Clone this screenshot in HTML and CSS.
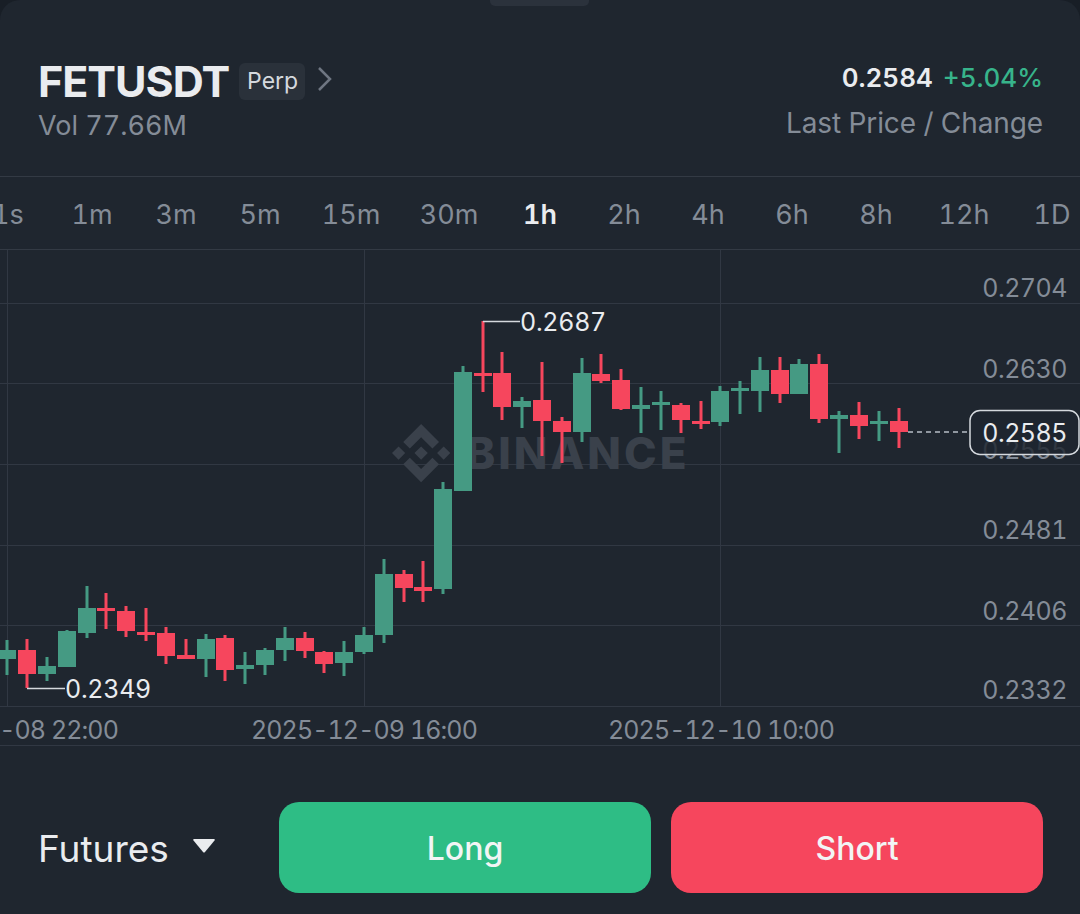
FILE: index.html
```html
<!DOCTYPE html>
<html>

<head>
<meta charset="utf-8">
<title>FETUSDT</title>
<link rel="stylesheet" href="styles.css">
</head>

<body>

<div id="sheet">
	<div class="handle"></div>

	<div id="header">
		<div>
			<div class="symbol">
				<span class="name">FETUSDT</span>
				<span class="badge">Perp</span>
				<svg class="chevron" width="16" height="26" viewBox="0 0 16 26">
					<path d="M2 2l11 11L2 24"/>
				</svg>
			</div>
			<div class="vol">Vol 77.66M</div>
		</div>
		<div class="quote">
			<div class="price"><span>0.2584</span> <span class="change">+5.04%</span></div>
			<div class="caption">Last Price / Change</div>
		</div>
	</div>

	<div id="tabs">
		<span>1s</span>
		<span>1m</span>
		<span>3m</span>
		<span>5m</span>
		<span>15m</span>
		<span>30m</span>
		<span class="active">1h</span>
		<span>2h</span>
		<span>4h</span>
		<span>6h</span>
		<span>8h</span>
		<span>12h</span>
		<span>1D</span>
	</div>

	<svg id="chart" width="1080" height="496" viewBox="0 250 1080 496">
		<g class="grid">
			<path d="M0 303.500H1080M0 383.500H1080M0 464.500H1080M0 545.500H1080M0 625.500H1080M0 706.500H1080M0 745.500H1080"/>
			<path d="M7.500 250V706M364.500 250V706M720.500 250V706"/>
		</g>

		<g class="mark">
			<g transform="translate(392 424) scale(.46)">
				<path d="M38.730 53.200l24.590-24.580 24.600 24.600 14.300-14.310L63.320 0 24.420 38.900zM0 63.310L14.300 49l14.310 14.310-14.310 14.300zM38.730 73.410L63.320 98l24.600-24.600 14.310 14.290-38.900 38.910-38.910-38.880-.010-.010zM98 63.310L112.300 49l14.310 14.300-14.310 14.320zM77.830 63.300L63.320 48.780 48.810 63.280l14.510 14.500z"/>
			</g>
			<text x="466" y="469">BINANCE</text>
		</g>

		<g class="axis">
			<text x="1067" y="297">0.2704</text>
			<text x="1067" y="378">0.2630</text>
			<text x="1067" y="459">0.2555</text>
			<text x="1067" y="539">0.2481</text>
			<text x="1067" y="620">0.2406</text>
			<text x="1067" y="699">0.2332</text>
		</g>
		<g class="times">
			<text x="5" y="739">2025-12-08 22:00</text>
			<text x="364" y="739">2025-12-09 16:00</text>
			<text x="721" y="739">2025-12-10 10:00</text>
		</g>

		<g class="up">
			<rect x="5.500" y="640" width="3" height="35"/><rect x="-2" y="650" width="18" height="9"/>
			<rect x="45.500" y="657" width="3" height="24"/><rect x="38" y="666" width="18" height="8"/>
			<rect x="65.500" y="630" width="3" height="37"/><rect x="58" y="631" width="18" height="36"/>
			<rect x="85.500" y="586" width="3" height="52"/><rect x="78" y="608" width="18" height="25"/>
			<rect x="204.500" y="634" width="3" height="43"/><rect x="197" y="639" width="18" height="20"/>
			<rect x="243.500" y="652" width="3" height="32"/><rect x="236" y="665" width="18" height="4"/>
			<rect x="263.500" y="648" width="3" height="27"/><rect x="256" y="650" width="18" height="15"/>
			<rect x="283.500" y="627" width="3" height="34"/><rect x="276" y="638" width="18" height="12"/>
			<rect x="342.500" y="641" width="3" height="35"/><rect x="335" y="652" width="18" height="11"/>
			<rect x="362.500" y="627" width="3" height="27"/><rect x="355" y="635" width="18" height="17"/>
			<rect x="382.500" y="559" width="3" height="84"/><rect x="375" y="574" width="18" height="61"/>
			<rect x="441.500" y="482" width="3" height="112"/><rect x="434" y="489" width="18" height="100"/>
			<rect x="461.500" y="366" width="3" height="125"/><rect x="454" y="372" width="18" height="119"/>
			<rect x="520.500" y="397" width="3" height="31"/><rect x="513" y="401" width="18" height="6"/>
			<rect x="580.500" y="358" width="3" height="84"/><rect x="573" y="373" width="18" height="59"/>
			<rect x="639.500" y="387" width="3" height="46"/><rect x="632" y="405" width="18" height="4"/>
			<rect x="659.500" y="391" width="3" height="39"/><rect x="652" y="402" width="18" height="3"/>
			<rect x="718.500" y="386" width="3" height="40"/><rect x="711" y="391" width="18" height="31"/>
			<rect x="738.500" y="381" width="3" height="33"/><rect x="731" y="388" width="18" height="3"/>
			<rect x="758.500" y="357" width="3" height="55"/><rect x="751" y="370" width="18" height="21"/>
			<rect x="797.500" y="359" width="3" height="35"/><rect x="790" y="364" width="18" height="30"/>
			<rect x="837.500" y="411" width="3" height="42"/><rect x="830" y="415" width="18" height="4"/>
			<rect x="877.500" y="411" width="3" height="30"/><rect x="870" y="421" width="18" height="3"/>
		</g>
		<g class="down">
			<rect x="25.500" y="639" width="3" height="49"/><rect x="18" y="650" width="18" height="24"/>
			<rect x="104.500" y="593" width="3" height="36"/><rect x="97" y="608" width="18" height="3"/>
			<rect x="124.500" y="606" width="3" height="31"/><rect x="117" y="611" width="18" height="20"/>
			<rect x="144.500" y="608" width="3" height="33"/><rect x="137" y="632" width="18" height="3"/>
			<rect x="164.500" y="627" width="3" height="37"/><rect x="157" y="633" width="18" height="23"/>
			<rect x="184.500" y="639" width="3" height="20"/><rect x="177" y="655" width="18" height="4"/>
			<rect x="223.500" y="635" width="3" height="46"/><rect x="216" y="638" width="18" height="32"/>
			<rect x="303.500" y="632" width="3" height="26"/><rect x="296" y="638" width="18" height="13"/>
			<rect x="322.500" y="651" width="3" height="22"/><rect x="315" y="652" width="18" height="12"/>
			<rect x="402.500" y="570" width="3" height="32"/><rect x="395" y="574" width="18" height="14"/>
			<rect x="421.500" y="561" width="3" height="41"/><rect x="414" y="587" width="18" height="4"/>
			<rect x="481.500" y="321" width="3" height="71"/><rect x="474" y="373" width="18" height="3"/>
			<rect x="500.500" y="352" width="3" height="68"/><rect x="493" y="373" width="18" height="34"/>
			<rect x="540.500" y="362" width="3" height="94"/><rect x="533" y="400" width="18" height="21"/>
			<rect x="560.500" y="417" width="3" height="46"/><rect x="553" y="421" width="18" height="11"/>
			<rect x="599.500" y="354" width="3" height="29"/><rect x="592" y="374" width="18" height="7"/>
			<rect x="619.500" y="369" width="3" height="41"/><rect x="612" y="380" width="18" height="29"/>
			<rect x="679.500" y="403" width="3" height="30"/><rect x="672" y="405" width="18" height="15"/>
			<rect x="699.500" y="401" width="3" height="28"/><rect x="692" y="421" width="18" height="3"/>
			<rect x="778.500" y="357" width="3" height="46"/><rect x="771" y="370" width="18" height="24"/>
			<rect x="817.500" y="354" width="3" height="69"/><rect x="810" y="364" width="18" height="55"/>
			<rect x="857.500" y="402" width="3" height="37"/><rect x="850" y="415" width="18" height="11"/>
			<rect x="897.500" y="408" width="3" height="40"/><rect x="890" y="421" width="18" height="11"/>
		</g>

		<g class="callout">
			<path d="M483 321.500H520"/>
			<text x="520" y="331">0.2687</text>
			<path d="M27 688.500H65"/>
			<text x="65" y="698">0.2349</text>
		</g>

		<path class="last" d="M908 432H970"/>
		<rect class="tag" x="970" y="410.500" width="109" height="44" rx="10"/>
		<text class="tagtext" x="1067" y="442">0.2585</text>
	</svg>

	<div id="footer">
		<div class="market">
			<span>Futures</span>
			<svg width="24" height="16" viewBox="0 0 24 16"><path d="M2 1h20q1.500 0 .500 1.500L13 14q-1 1.200-2 0L1.500 2.500Q.500 1 2 1z"/></svg>
		</div>
		<button type="button" class="long">Long</button>
		<button type="button" class="short">Short</button>
	</div>
</div>

</body>

</html>
```

FILE: styles.css
```css
html, body {
	margin: 0;
	padding: 0;
	background-color: #181e26;
}

body {
	font-family: "Inter", "Liberation Sans", sans-serif;
	font-variant-numeric: tabular-nums;
	overflow: hidden;
}

#sheet {
	position: relative;
	width: 1080px;
	height: 914px;
	overflow: hidden;
	border-radius: 20px 20px 0 0;
	background-color: #1f262f;
}

.handle {
	position: absolute;
	top: -8px;
	left: 490px;
	width: 99px;
	height: 14px;
	border-radius: 5px;
	background-color: #2b323c;
}

#header {
	display: flex;
	justify-content: space-between;
	box-sizing: border-box;
	height: 177px;
	padding: 57px 37px 0 38px;
	border-bottom: 1px solid #333a44;
}

.symbol {
	display: flex;
	align-items: center;
}

.name {
	font-size: 43px;
	font-weight: 700;
	line-height: 48px;
	letter-spacing: -1px;
	color: #eaecef;
}

.badge {
	margin-left: 10px;
	padding: 0 7px 0 8px;
	height: 37px;
	line-height: 37px;
	font-size: 23px;
	border-radius: 6px;
	color: #d5d9de;
	background-color: #2a313a;
}

.chevron {
	margin: -4px 0 0 12px;
	fill: none;
	stroke: #6f7682;
	stroke-width: 2.500;
}

.vol {
	margin-top: 3px;
	font-size: 27px;
	line-height: 36px;
	color: #848c97;
}

.quote {
	text-align: right;
}

.price {
	margin-top: 3px;
	font-size: 26px;
	line-height: 36px;
	font-weight: 600;
	color: #eaecef;
}

.change {
	margin-left: 3px;
	font-weight: 500;
	color: #37b48b;
}

.caption {
	margin-top: 9px;
	font-size: 28px;
	line-height: 36px;
	letter-spacing: -.1px;
	color: #848c97;
}

#tabs {
	display: grid;
	grid-template-columns: repeat(4, 84px) 98px 98px repeat(5, 84px) 92px 84px;
	align-items: center;
	justify-items: center;
	box-sizing: border-box;
	width: 1200px;
	height: 73px;
	padding-top: 2px;
	margin-left: -34px;
	border-bottom: 1px solid #333a44;
	font-size: 27px;
	color: #848c97;
	white-space: nowrap;
}

#tabs .active {
	font-weight: 600;
	color: #eaecef;
}

#chart {
	display: block;
}

.grid path {
	fill: none;
	stroke: #313843;
	stroke-width: 1;
}

.mark {
	fill: #3a414b;
}

.mark text {
	font-size: 44px;
	font-weight: 800;
	letter-spacing: 3px;
}

.axis text {
	font-size: 25px;
	letter-spacing: -.5px;
	fill: #848c97;
	text-anchor: end;
}

.times text {
	font-size: 25px;
	letter-spacing: -.9px;
	fill: #848c97;
	text-anchor: middle;
}

.up {
	fill: #459a83;
}

.down {
	fill: #f6465d;
}

.callout path {
	fill: none;
	stroke: #d5d9de;
	stroke-width: 1.500;
}

.callout text {
	font-size: 25px;
	letter-spacing: -.3px;
	fill: #eaecef;
}

.last {
	fill: none;
	stroke: #b7bdc6;
	stroke-width: 1.500;
	stroke-dasharray: 5 4;
}

.tag {
	fill: #1f262f;
	fill-opacity: .82;
	stroke: #d5d9de;
	stroke-width: 1.500;
}

.tagtext {
	font-size: 25px;
	letter-spacing: -.5px;
	fill: #eaecef;
	text-anchor: end;
}

#footer {
	display: flex;
	align-items: center;
	gap: 20px;
	padding: 56px 37px 0 38px;
}

.market {
	display: flex;
	align-items: center;
	justify-content: space-between;
	width: 221px;
	padding: 2px 43px 0 0;
	box-sizing: border-box;
	font-size: 37px;
	color: #eaecef;
}

.market svg {
	fill: #eaecef;
	margin-top: -6px;
}

#footer button {
	width: 372px;
	height: 91px;
	padding-top: 2px;
	border: 0;
	border-radius: 20px;
	font-family: inherit;
	font-size: 32px;
	font-weight: 500;
	color: #f2f5f5;
}

#footer .long {
	background-color: #2ebd85;
}

#footer .short {
	background-color: #f6465d;
}
```
